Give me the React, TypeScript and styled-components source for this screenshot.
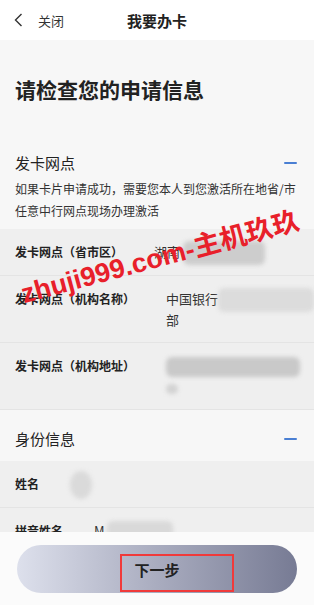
import React from 'react';
import styled, { createGlobalStyle } from 'styled-components';

const GlobalStyle = createGlobalStyle`
  html, body {
    margin: 0;
    padding: 0;
    background: #ffffff;
  }
  body {
    font-family: "Noto Sans CJK SC", "Noto Sans", "Liberation Sans", sans-serif;
    color: #222;
  }
`;

const Page = styled.div`
  position: relative;
  width: 314px;
  min-height: 605px;
  background: #f7f7f7;
  overflow: hidden;
`;

const Header = styled.header`
  position: relative;
  width: 322px;
  height: 40px;
  background: #ffffff;
  display: flex;
  align-items: center;
  justify-content: center;
`;

const BackButton = styled.div`
  position: absolute;
  left: 14px;
  top: 0;
  height: 40px;
  display: flex;
  align-items: center;
  gap: 15px;
  font-size: 13px;
  color: #333;
`;

const HeaderTitle = styled.h1`
  margin: 0 8px 0 0;
  font-size: 15px;
  font-weight: 700;
  color: #222;
`;

const PageTitle = styled.h2`
  margin: 0;
  padding: 34px 15px 0;
  font-size: 21px;
  line-height: 30px;
  font-weight: 700;
  color: #222;
`;

const SectionHead = styled.div<{ $top: number; $bottom: number }>`
  display: flex;
  align-items: center;
  justify-content: space-between;
  padding: ${({ $top }) => $top}px 17px ${({ $bottom }) => $bottom}px 15px;
  font-size: 15px;
  line-height: 30px;
  color: #222;
`;

const Collapse = styled.span`
  display: block;
  width: 13px;
  height: 2px;
  border-radius: 1px;
  background: #4a7fd3;
`;

const Description = styled.p`
  margin: 0;
  padding: 0 12px 7px 15px;
  font-size: 12px;
  line-height: 22px;
  color: #333;
`;

const Rows = styled.div`
  background: #efefef;
`;

const Row = styled.div`
  display: flex;
  gap: 31px;
  padding: 13px 15px;
  border-bottom: 1px solid #e4e4e4;
  font-size: 12px;
  line-height: 20px;
`;

const Label = styled.div`
  flex: none;
  font-weight: 700;
  color: #222;
`;

const Value = styled.div<{ $lines?: number }>`
  flex: 1;
  color: #333;
  font-size: 13px;
  height: ${({ $lines = 1 }) => $lines * 20}px;
  white-space: nowrap;
`;

const Smudge = styled.span<{ $w: number; $h: number; $tone: string; $round?: boolean }>`
  display: inline-block;
  vertical-align: middle;
  width: ${({ $w }) => $w}px;
  height: ${({ $h }) => $h}px;
  margin: ${({ $h }) => Math.min(0, (20 - $h) / 2)}px 0;
  background: ${({ $tone }) => $tone};
  border-radius: ${({ $round }) => ($round ? '50%' : '6px')};
  filter: blur(2px);
`;

const Footer = styled.footer`
  position: fixed;
  left: 0;
  bottom: 0;
  width: 314px;
  height: 73px;
  background: #fbfbfb;
  display: flex;
  justify-content: center;
  padding-top: 13px;
  box-sizing: border-box;
`;

const NextButton = styled.button`
  position: relative;
  width: 280px;
  height: 48px;
  border: none;
  border-radius: 24px;
  background: linear-gradient(90deg, #dde0ec 0%, #a9acbf 50%, #777b94 100%);
  font-family: inherit;
  font-size: 15px;
  font-weight: 700;
  color: #222;
  padding: 0;
`;

const Highlight = styled.span`
  position: absolute;
  left: 103px;
  top: 9px;
  width: 110px;
  height: 34px;
  border: 2px solid #f03a3a;
`;

const Watermark = styled.div`
  position: absolute;
  left: 26px;
  top: 272px;
  transform: rotate(-15deg);
  transform-origin: left bottom;
  font-family: "Liberation Sans", "Noto Sans CJK SC", sans-serif;
  font-size: 27px;
  font-weight: 700;
  color: #e8202a;
  white-space: nowrap;
  pointer-events: none;
`;

const Chevron = () => (
  <svg width="9" height="14" viewBox="0 0 9 14">
    <polyline points="7.5,1 1.5,7 7.5,13" fill="none" stroke="#333" strokeWidth="1.4" />
  </svg>
);

export default function App() {
  return (
    <>
      <GlobalStyle />
      <Page>
        <Header>
          <BackButton>
            <Chevron />
            <span>关闭</span>
          </BackButton>
          <HeaderTitle>我要办卡</HeaderTitle>
        </Header>

        <PageTitle>请检查您的申请信息</PageTitle>

        <SectionHead $top={44} $bottom={0}>
          <span>发卡网点</span>
          <Collapse />
        </SectionHead>
        <Description>
          如果卡片申请成功，需要您本人到您激活所在地省/市任意中行网点现场办理激活
        </Description>
        <Rows>
          <Row>
            <Label>发卡网点（省市区）</Label>
            <Value>
              湖南 <Smudge $w={82} $h={24} $tone="#cdcdcd" />
            </Value>
          </Row>
          <Row>
            <Label>发卡网点（机构名称）</Label>
            <Value $lines={2}>
              中国银行<Smudge $w={96} $h={24} $tone="#dcdcdc" />
              <br />部
            </Value>
          </Row>
          <Row>
            <Label>发卡网点（机构地址）</Label>
            <Value $lines={2}>
              <Smudge $w={134} $h={20} $tone="#c9c9c9" />
              <br />
              <Smudge $w={12} $h={10} $tone="#d2d2d2" />
            </Value>
          </Row>
        </Rows>

        <SectionHead $top={14} $bottom={7}>
          <span>身份信息</span>
          <Collapse />
        </SectionHead>
        <Rows>
          <Row>
            <Label>姓名</Label>
            <Value>
              <Smudge $w={22} $h={28} $tone="#dadada" $round />
            </Value>
          </Row>
          <Row>
            <Label>拼音姓名</Label>
            <Value>
              M <Smudge $w={66} $h={22} $tone="#d9d9d9" />
            </Value>
          </Row>
        </Rows>

        <Watermark>zhuji999.com-主机玖玖</Watermark>

        <Footer>
          <NextButton>
            下一步
            <Highlight />
          </NextButton>
        </Footer>
      </Page>
    </>
  );
}
